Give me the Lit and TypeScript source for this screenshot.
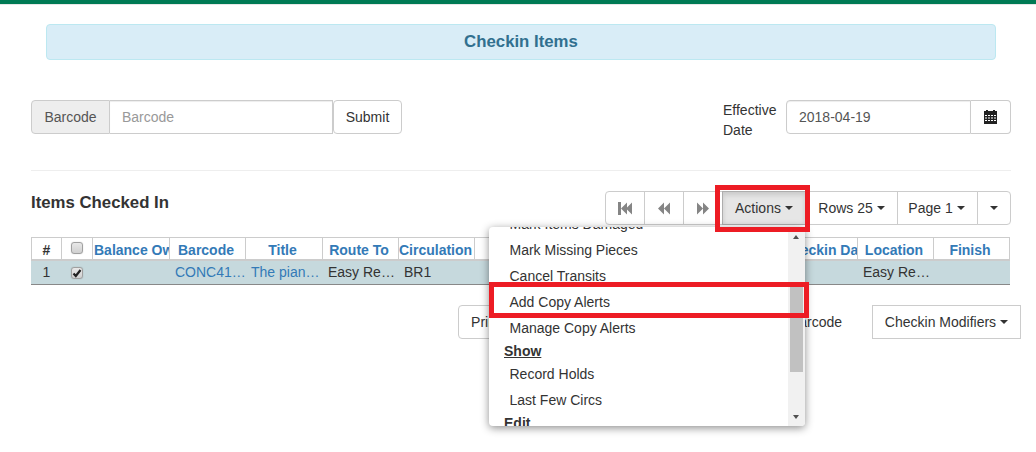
import { LitElement, html, css } from 'lit';
import { customElement } from 'lit/decorators.js';

const caret = html`<span class="caret"></span>`;

const headers = [
  ['#', 'dark'],
  ['', 'check'],
  ['Balance Owed', 'left'],
  ['Barcode', ''],
  ['Title', ''],
  ['Route To', ''],
  ['Circulation', ''],
  ['', ''],
  ['Checkin Date', ''],
  ['Location', ''],
  ['Finish', ''],
];

const menuItems = [
  ['item', 'Mark Items Damaged'],
  ['item', 'Mark Missing Pieces'],
  ['item', 'Cancel Transits'],
  ['item', 'Add Copy Alerts'],
  ['item', 'Manage Copy Alerts'],
  ['head', 'Show'],
  ['item', 'Record Holds'],
  ['item', 'Last Few Circs'],
  ['head', 'Edit'],
];

@customElement('app-root')
export class AppRoot extends LitElement {
  static styles = css`
    :host {
      display: block;
      position: relative;
      width: 1036px;
      height: 452px;
      overflow: hidden;
      background: #fff;
      font-family: 'Liberation Sans', Arial, sans-serif;
      font-size: 14px;
      line-height: 20px;
      color: #333;
    }
    * { box-sizing: border-box; }
    .topbar { height: 5px; background: #007a54; border-bottom: 1px solid #e7e7e7; }
    .alert {
      margin: 19px 40px 0 46px;
      height: 36px;
      background: #d9edf7;
      border: 1px solid #bce8f1;
      border-radius: 4px;
      color: #31708f;
      font-size: 16.8px;
      font-weight: 700;
      display: flex;
      align-items: center;
      justify-content: center;
    }
    .form-row {
      margin: 40px 25px 0 31px;
      height: 34px;
      display: flex;
      justify-content: space-between;
    }
    .group { display: flex; height: 34px; }
    .addon {
      display: flex;
      align-items: center;
      justify-content: center;
      border: 1px solid #ccc;
      background: #eee;
      color: #555;
      width: 79px;
      border-radius: 4px 0 0 4px;
    }
    .input {
      display: flex;
      align-items: center;
      border: 1px solid #ccc;
      border-left: 0;
      padding: 0 12px;
      width: 223px;
      color: #999;
      box-shadow: inset 0 1px 1px rgba(0, 0, 0, 0.075);
    }
    .btn {
      display: flex;
      align-items: center;
      justify-content: center;
      border: 1px solid #ccc;
      background: #fff;
      height: 34px;
      border-radius: 4px;
    }
    .submit { width: 69px; }
    .date-wrap { display: flex; }
    .date-label { width: 63px; line-height: 20px; }
    .date-input {
      width: 185px;
      border-left: 1px solid #ccc;
      border-radius: 4px 0 0 4px;
      color: #555;
    }
    .date-btn {
      width: 40px;
      border-left: 0;
      border-radius: 0 4px 4px 0;
    }
    hr { margin: 36px 25px 0 31px; border: 0; border-top: 1px solid #eee; }
    .grid-head {
      margin: 20px 25px 0 31px;
      display: flex;
      justify-content: space-between;
      height: 34px;
    }
    .grid-title { font-size: 16.8px; font-weight: 700; margin-top: 2px; }
    .toolbar { display: flex; }
    .tool {
      display: flex;
      align-items: center;
      justify-content: center;
      gap: 4px;
      height: 34px;
      border: 1px solid #ccc;
      margin-left: -1px;
      background: #fff;
      white-space: nowrap;
    }
    .tool svg { fill: #858585; }
    .tool:first-child { border-radius: 4px 0 0 4px; margin-left: 0; }
    .tool:last-child { border-radius: 0 4px 4px 0; }
    .tool.page { padding-right: 2px; }
    .tool.active {
      background: #e6e6e6;
      border-color: #adadad;
      box-shadow: inset 0 3px 5px rgba(0, 0, 0, 0.125);
    }
    .caret {
      display: inline-block;
      width: 0;
      height: 0;
      border-top: 4px solid #333;
      border-left: 4px solid transparent;
      border-right: 4px solid transparent;
    }
    .table {
      margin: 12px 26px 0 31px;
      width: 979px;
      display: grid;
      grid-template-columns: 31px 31px 77px 76px 77px 76px 76px 307px 76px 76px 76px;
    }
    .th {
      height: 24px;
      border-top: 1px solid #ccc;
      border-right: 1px solid #ccc;
      border-bottom: 2px solid #ccc;
      padding-right: 3px;
      color: #337ab7;
      font-weight: 700;
      text-align: center;
      line-height: 24px;
      white-space: nowrap;
      overflow: hidden;
    }
    .th:first-child { border-left: 1px solid #ccc; padding-right: 0; }
    .th.dark { color: #333; }
    .th.left { text-align: left; padding-left: 1px; padding-right: 0; }
    .th.check { padding: 0; }
    .th:last-child { border-right: 3px solid #ccc; }
    .td {
      height: 24px;
      background: #c6d9dd;
      border-bottom: 1px solid #888;
      line-height: 22px;
      padding-left: 5px;
      white-space: nowrap;
    }
    .td a { color: #337ab7; }
    .td.center { text-align: center; padding-left: 0; }
    .td.check { padding-left: 0; }
    .box {
      display: block;
      width: 12px;
      height: 12px;
      margin: 6px 0 0 9px;
      border: 1px solid #a0a0a0;
      border-radius: 3px;
      background: linear-gradient(#e8e8e8, #d0d0d0);
      box-shadow: 0 0 1px rgba(0, 0, 0, 0.3);
    }
    .box svg { display: block; }
    .box.head { margin-top: 4px; }
    .actions {
      margin: 20px 15px 0 0;
      display: flex;
      justify-content: flex-end;
      align-items: center;
    }
    .print { width: 100px; margin-right: 196px; justify-content: flex-start; padding-left: 12px; white-space: nowrap; }
    .strict { margin-right: 30px; }
    .modifiers { width: 149px; border-radius: 0; gap: 4px; }
    .menu {
      position: absolute;
      left: 489px;
      top: 227px;
      width: 316px;
      height: 199px;
      background: #fff;
      border-radius: 4px;
      box-shadow: 0 2px 8px rgba(0, 0, 0, 0.45);
      overflow: hidden;
    }
    .menu-list { margin-top: -16px; }
    .menu .item { height: 26px; line-height: 26px; padding-left: 20.5px; }
    .menu .head {
      height: 20px;
      line-height: 20px;
      padding-left: 15px;
      font-weight: 700;
    }
    .menu .head.show { text-decoration: underline; }
    .scrollbar {
      position: absolute;
      right: 0;
      top: 0;
      bottom: 0;
      width: 17px;
      background: #f1f1f1;
    }
    .thumb {
      position: absolute;
      left: 2px;
      right: 2px;
      top: 60px;
      height: 85px;
      background: #c1c1c1;
    }
    .arrow {
      position: absolute;
      left: 5px;
      width: 0;
      height: 0;
      border-left: 3.5px solid transparent;
      border-right: 3.5px solid transparent;
    }
    .arrow.up { top: 8px; border-bottom: 4px solid #505050; }
    .arrow.down { bottom: 7px; border-top: 4px solid #505050; }
    .mark { position: absolute; border: 5px solid #ed1c24; }
    .mark.one { left: 715px; top: 185px; width: 95px; height: 47px; }
    .mark.two { left: 489px; top: 282px; width: 320px; height: 36px; }
  `;

  render() {
    return html`
      <div class="topbar"></div>
      <div class="alert">Checkin Items</div>

      <div class="form-row">
        <div class="group">
          <div class="addon">Barcode</div>
          <div class="input">Barcode</div>
          <div class="btn submit">Submit</div>
        </div>
        <div class="date-wrap">
          <div class="date-label">Effective Date</div>
          <div class="group">
            <div class="input date-input">2018-04-19</div>
            <div class="btn date-btn">
              <svg width="13" height="14" viewBox="0 0 13 14" fill="#222">
                <path fill-rule="evenodd" d="M2 0h2v1h5V0h2v1h2v13H0V1h2zM1 5v1h2V5zm3 0v1h2V5zm3 0v1h2V5zm3 0v1h2V5zM1 7.500v1h2v-1zm3 0v1h2v-1zm3 0v1h2v-1zm3 0v1h2v-1zM1 10v1h2v-1zm3 0v1h2v-1zm3 0v1h2v-1zm3 0v1h2v-1z"/>
              </svg>
            </div>
          </div>
        </div>
      </div>

      <hr />

      <div class="grid-head">
        <div class="grid-title">Items Checked In</div>
        <div class="toolbar">
          <div class="tool" style="width:40px">
            <svg width="14" height="13" viewBox="0 0 14 13"><path d="M0 0h3v13H0zM3 6.500l6-6v12zM8 6.500l6-6v12z"/></svg>
          </div>
          <div class="tool" style="width:40px">
            <svg width="12" height="13" viewBox="0 0 12 13"><path d="M0 6.500l6-6v12zM6 6.500l6-6v12z"/></svg>
          </div>
          <div class="tool" style="width:40px">
            <svg width="12" height="13" viewBox="0 0 12 13"><path d="M0 .5l6 6-6 6zM6 .5l6 6-6 6z"/></svg>
          </div>
          <div class="tool active" style="width:84px">Actions ${caret}</div>
          <div class="tool" style="width:93px">Rows 25 ${caret}</div>
          <div class="tool page" style="width:81px">Page 1 ${caret}</div>
          <div class="tool" style="width:34px">${caret}</div>
        </div>
      </div>

      <div class="table">
        ${headers.map(([label, kind], i) =>
          i === 1
            ? html`<div class="th check"><span class="box head"></span></div>`
            : html`<div class="th ${kind}">${label}</div>`
        )}
        <div class="td center">1</div>
        <div class="td check">
          <span class="box">
            <svg width="10" height="10" viewBox="0 0 10 10"><path d="M1.500 5.500l2.300 2.500L8.500 2" fill="none" stroke="#222" stroke-width="2.200"/></svg>
          </span>
        </div>
        <div class="td"></div>
        <div class="td"><a>CONC41…</a></div>
        <div class="td"><a>The pian…</a></div>
        <div class="td">Easy Re…</div>
        <div class="td">BR1</div>
        <div class="td"></div>
        <div class="td"></div>
        <div class="td">Easy Re…</div>
        <div class="td"></div>
      </div>

      <div class="actions">
        <div class="btn print">Print Receipt</div>
        <div class="strict">Strict Barcode</div>
        <div class="btn modifiers">Checkin Modifiers ${caret}</div>
      </div>

      <div class="menu">
        <div class="menu-list">
          ${menuItems.map(
            ([kind, label]) =>
              html`<div class="${kind} ${label === 'Show' ? 'show' : ''}">${label}</div>`
          )}
        </div>
        <div class="scrollbar">
          <div class="arrow up"></div>
          <div class="thumb"></div>
          <div class="arrow down"></div>
        </div>
      </div>

      <div class="mark one"></div>
      <div class="mark two"></div>
    `;
  }
}
